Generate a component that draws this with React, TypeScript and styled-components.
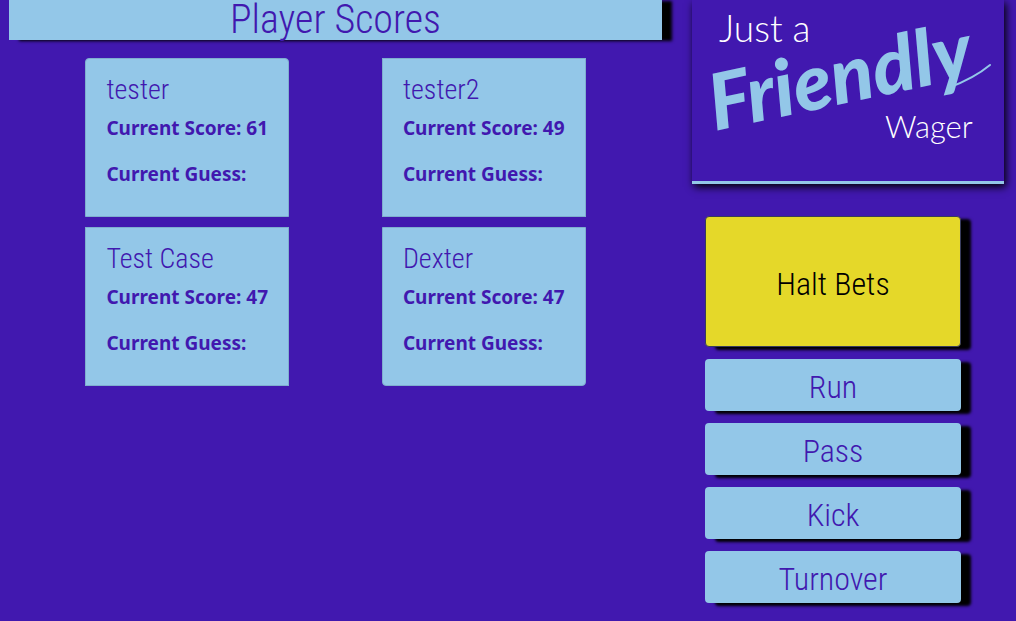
import React from "react";
import styled, { createGlobalStyle } from "styled-components";

const purple = "#4118af";
const sky = "#93c7e8";
const yellow = "#e5d829";
const display = '"Roboto Condensed", "Roboto", sans-serif';

const GlobalStyle = createGlobalStyle`
  *, *::before, *::after { box-sizing: border-box; }
  body {
    margin: 0;
    background: ${purple};
    color: ${purple};
    font-family: "Noto Sans", "Open Sans", sans-serif;
  }
`;

const Page = styled.div`
  display: grid;
  grid-template-columns: minmax(0, 1fr) 312px;
  column-gap: 30px;
  align-items: start;
  padding: 0 12px 18px 9px;
`;

const Scores = styled.main`
  display: flex;
  flex-direction: column;
  gap: 18px;
`;

const Title = styled.h1`
  margin: 0;
  background: ${sky};
  box-shadow: 10px 1px 3px #000;
  font: 300 40px/40px ${display};
  text-align: center;
`;

const CardGrid = styled.ul`
  display: grid;
  grid-template-columns: repeat(2, minmax(0, 1fr));
  justify-items: center;
  row-gap: 10px;
  margin: 0;
  padding: 0 30px;
  list-style: none;
`;

const Card = styled.li`
  padding: 15px 20px 28px;
  border: 1px solid #7faecf;
  background: ${sky};

  &:first-child { border-radius: 4px 4px 0 0; }
  &:last-child { border-radius: 0 0 4px 4px; }
`;

const PlayerName = styled.h2`
  margin: 0 0 8px;
  font: 300 28px/32px ${display};
`;

const Stat = styled.p`
  margin: 0;
  font-size: 19px;
  font-weight: 700;
  line-height: 28px;

  & + & { margin-top: 18px; }
`;

const Controls = styled.aside`
  display: flex;
  flex-direction: column;
  gap: 32px;
`;

const Brand = styled.header`
  border-bottom: 3px solid ${sky};
  box-shadow: 2px 3px 8px #000;
`;

const Logo = styled.svg`
  display: block;
  width: 100%;
  height: auto;
`;

const Plain = styled.text<{ $size: number }>`
  fill: #fff;
  font: 300 ${(p) => p.$size}px "Lato", sans-serif;
`;

const Script = styled.text`
  fill: ${sky};
  font: italic 900 78px "Lato", sans-serif;
`;

const Buttons = styled.div`
  display: flex;
  flex-direction: column;
  gap: 12px;
  padding: 0 43px 0 13px;
`;

const PlayButton = styled.button`
  height: 52px;
  padding: 4px 0 0;
  border: 0;
  border-radius: 4px;
  background: ${sky};
  box-shadow: 10px 3px 3px #000;
  color: ${purple};
  font: 300 32px/40px ${display};
  cursor: pointer;
`;

const HaltButton = styled(PlayButton)`
  height: 131px;
  border: 1px solid #383c5c;
  background: ${yellow};
  color: #000;
`;

const players = [
  { name: "tester", score: 61 },
  { name: "tester2", score: 49 },
  { name: "Test Case", score: 47 },
  { name: "Dexter", score: 47 },
];

const plays = ["Run", "Pass", "Kick", "Turnover"];

export default function App() {
  return (
    <>
      <GlobalStyle />
      <Page>
        <Scores>
          <Title>Player Scores</Title>
          <CardGrid>
            {players.map((player) => (
              <Card key={player.name}>
                <PlayerName>{player.name}</PlayerName>
                <Stat>Current Score: {player.score}</Stat>
                <Stat>Current Guess:</Stat>
              </Card>
            ))}
          </CardGrid>
        </Scores>
        <Controls>
          <Brand>
            <Logo viewBox="0 0 312 181" role="img" aria-label="Just a Friendly Wager">
              <Plain $size={37} x="27" y="42">Just a</Plain>
              <Script transform="translate(23 131) rotate(-12)">Friendly</Script>
              <path
                d="M256 88 C272 82 286 75 298 65"
                fill="none"
                stroke={sky}
                strokeWidth="2"
                strokeLinecap="round"
              />
              <Plain $size={31} x="193" y="138">Wager</Plain>
            </Logo>
          </Brand>
          <Buttons>
            <HaltButton type="button">Halt Bets</HaltButton>
            {plays.map((play) => (
              <PlayButton key={play} type="button">{play}</PlayButton>
            ))}
          </Buttons>
        </Controls>
      </Page>
    </>
  );
}
